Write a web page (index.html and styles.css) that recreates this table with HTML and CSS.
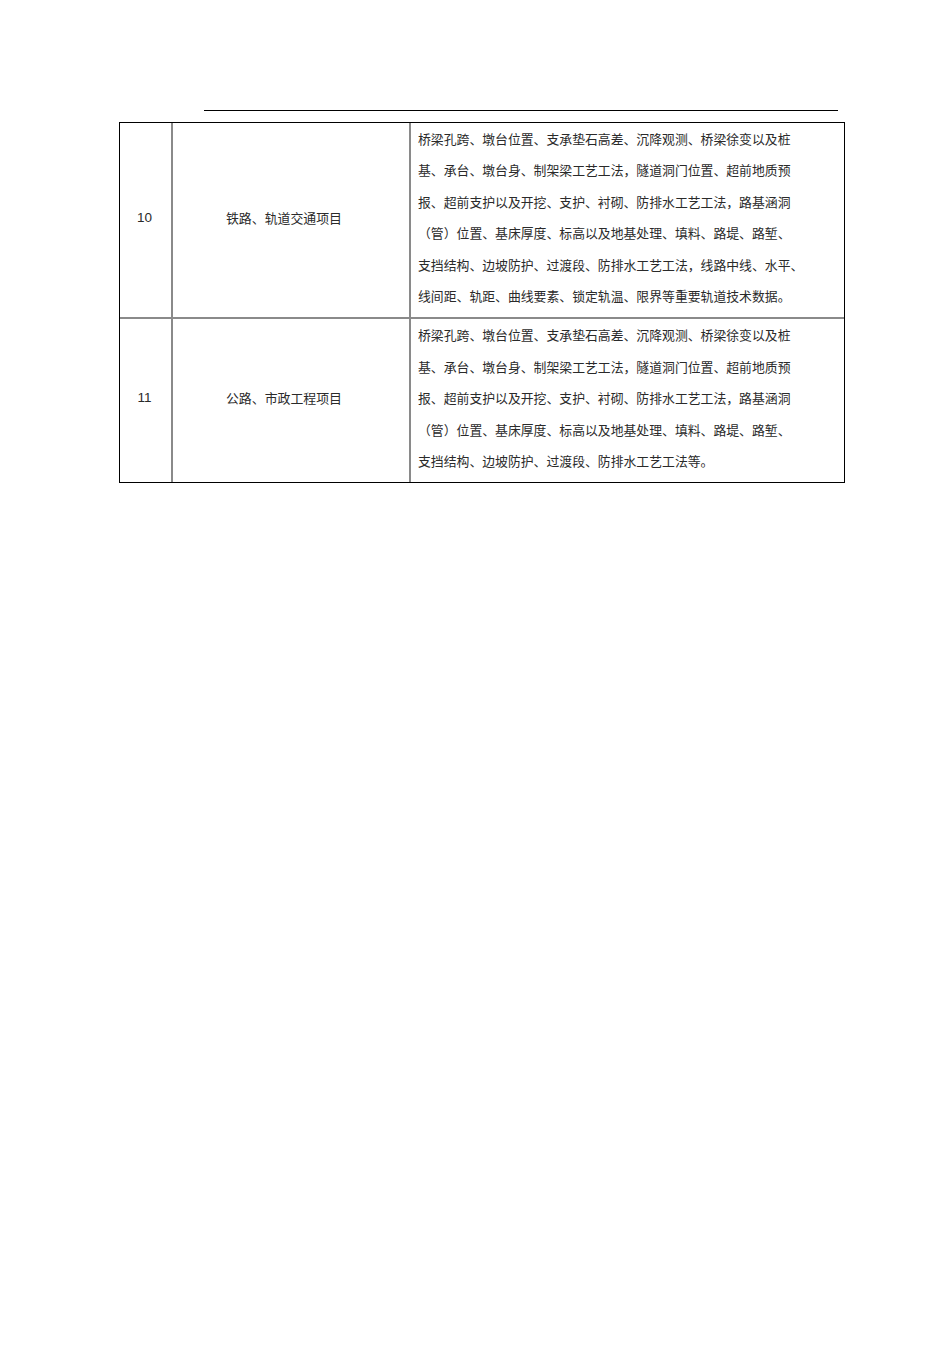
FILE: index.html
```html
<!DOCTYPE html>
<html lang="zh-CN">
<head>
<meta charset="utf-8">
<title>表格</title>
<link rel="stylesheet" href="styles.css">
</head>
<body>
<div class="page">
  <div class="rule"></div>
  <div class="table">
    <div class="row">
      <div class="cell num">10</div>
      <div class="cell name">铁路、轨道交通项目</div>
      <div class="cell desc">
        <div class="line">桥梁孔跨、墩台位置、支承垫石高差、沉降观测、桥梁徐变以及桩</div>
        <div class="line">基、承台、墩台身、制架梁工艺工法，隧道洞门位置、超前地质预</div>
        <div class="line">报、超前支护以及开挖、支护、衬砌、防排水工艺工法，路基涵洞</div>
        <div class="line">（管）位置、基床厚度、标高以及地基处理、填料、路堤、路堑、</div>
        <div class="line">支挡结构、边坡防护、过渡段、防排水工艺工法，线路中线、水平、</div>
        <div class="line">线间距、轨距、曲线要素、锁定轨温、限界等重要轨道技术数据。</div>
      </div>
    </div>
    <div class="row">
      <div class="cell num">11</div>
      <div class="cell name">公路、市政工程项目</div>
      <div class="cell desc">
        <div class="line">桥梁孔跨、墩台位置、支承垫石高差、沉降观测、桥梁徐变以及桩</div>
        <div class="line">基、承台、墩台身、制架梁工艺工法，隧道洞门位置、超前地质预</div>
        <div class="line">报、超前支护以及开挖、支护、衬砌、防排水工艺工法，路基涵洞</div>
        <div class="line">（管）位置、基床厚度、标高以及地基处理、填料、路堤、路堑、</div>
        <div class="line">支挡结构、边坡防护、过渡段、防排水工艺工法等。</div>
      </div>
    </div>
  </div>
</div>
</body>
</html>
```
FILE: styles.css
```css
html, body {
  margin: 0;
  padding: 0;
  background: #fff;
}
body {
  font-family: "Noto Sans CJK SC", "Liberation Sans", sans-serif;
  color: #2a2a2a;
}
.page {
  padding-top: 110px;
}
.rule {
  margin-left: 204px;
  width: 634px;
  height: 1px;
  background: #000;
}
.table {
  margin-top: 11px;
  margin-left: 119px;
  width: 726px;
  box-sizing: border-box;
  border: 1px solid #000;
}
.row {
  display: grid;
  grid-template-columns: 51px 238px 1fr;
}
.row + .row {
  border-top: 2px solid #8a8a8a;
}
.cell {
  box-sizing: border-box;
  padding: 0 0 6px 0;
}
.cell + .cell {
  border-left: 2px solid #8a8a8a;
}
.num {
  display: flex;
  align-items: center;
  justify-content: center;
  font-family: "Liberation Sans", Arial, sans-serif;
  font-size: 13.5px;
  padding-right: 2px;
}
.name {
  display: flex;
  align-items: center;
  justify-content: center;
  font-size: 12.9px;
  padding-right: 14px;
}
.desc {
  padding-left: 7px;
  font-size: 12.85px;
  line-height: 31.4px;
}
.line {
  white-space: nowrap;
}
```
